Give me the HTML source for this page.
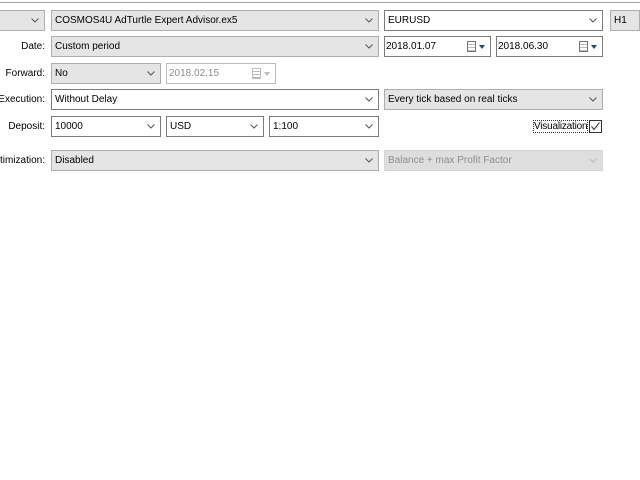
<!DOCTYPE html>
<html><head><style>
body{margin:0;width:640px;height:480px;background:#fff;position:relative;overflow:hidden;font-family:"Liberation Sans",Arial,sans-serif;font-size:10px;color:#000}
.b{position:absolute;box-sizing:border-box;border:1px solid #adadad;background:#e5e5e5;height:21px;line-height:20px;padding-left:3px;white-space:nowrap}
.w{background:#fff;border-color:#7a7a7a}
.d{color:#8d8d8d}
.dw{background:#fff;border-color:#bcbcbc;color:#8d8d8d}
.a{position:absolute;right:5px;top:7px;width:8px;height:5px}
.l{position:absolute;text-align:right;right:595px;line-height:21px;font-size:10px}
.cal{position:absolute;right:14px;top:4px;width:9px;height:11px;border:1px solid #777;background:repeating-linear-gradient(#fff 0 2px,#bbb 2px 3px);box-sizing:border-box}
.ct{position:absolute;right:5px;top:8px;border-left:3px solid transparent;border-right:3px solid transparent;border-top:4px solid #345}
</style></head><body>
<div style="position:absolute;left:0;top:2px;width:640px;height:1px;background:#a0a0a0"></div>

<div class="b" style="left:-5px;top:10px;width:50px"><svg class="a" viewBox="0 0 8 5"><polyline points="0.5,0.5 4,4 7.5,0.5" fill="none" stroke="#555" stroke-width="1"/></svg></div>
<div class="b" style="left:51px;top:10px;width:328px">COSMOS4U AdTurtle Expert Advisor.ex5<svg class="a" viewBox="0 0 8 5"><polyline points="0.5,0.5 4,4 7.5,0.5" fill="none" stroke="#555"/></svg></div>
<div class="b w" style="left:384px;top:10px;width:219px">EURUSD<svg class="a" viewBox="0 0 8 5"><polyline points="0.5,0.5 4,4 7.5,0.5" fill="none" stroke="#555"/></svg></div>
<div class="b" style="left:610px;top:10px;width:30px">H1</div>

<div class="l" style="top:36px">Date:</div>
<div class="b" style="left:51px;top:36px;width:328px">Custom period<svg class="a" viewBox="0 0 8 5"><polyline points="0.5,0.5 4,4 7.5,0.5" fill="none" stroke="#555"/></svg></div>
<div class="b w" style="left:384px;top:36px;width:107px;padding-left:1px">2018.01.07<span class="cal"></span><span class="ct"></span></div>
<div class="b w" style="left:496px;top:36px;width:107px;padding-left:1px">2018.06.30<span class="cal"></span><span class="ct"></span></div>

<div class="l" style="top:63px">Forward:</div>
<div class="b" style="left:51px;top:63px;width:110px">No<svg class="a" viewBox="0 0 8 5"><polyline points="0.5,0.5 4,4 7.5,0.5" fill="none" stroke="#555"/></svg></div>
<div class="b dw" style="left:166px;top:63px;width:110px;padding-left:2px">2018.02.15<span class="cal" style="border-color:#bbb"></span><span class="ct" style="border-top-color:#bbb"></span></div>

<div class="l" style="top:89px">Execution:</div>
<div class="b w" style="left:51px;top:89px;width:328px">Without Delay<svg class="a" viewBox="0 0 8 5"><polyline points="0.5,0.5 4,4 7.5,0.5" fill="none" stroke="#555"/></svg></div>
<div class="b" style="left:384px;top:89px;width:219px">Every tick based on real ticks<svg class="a" viewBox="0 0 8 5"><polyline points="0.5,0.5 4,4 7.5,0.5" fill="none" stroke="#555"/></svg></div>

<div class="l" style="top:116px">Deposit:</div>
<div class="b w" style="left:51px;top:116px;width:110px">10000<svg class="a" viewBox="0 0 8 5"><polyline points="0.5,0.5 4,4 7.5,0.5" fill="none" stroke="#555"/></svg></div>
<div class="b w" style="left:166px;top:116px;width:98px">USD<svg class="a" viewBox="0 0 8 5"><polyline points="0.5,0.5 4,4 7.5,0.5" fill="none" stroke="#555"/></svg></div>
<div class="b w" style="left:269px;top:116px;width:110px">1:100<svg class="a" viewBox="0 0 8 5"><polyline points="0.5,0.5 4,4 7.5,0.5" fill="none" stroke="#555"/></svg></div>
<div style="position:absolute;left:533px;top:120px;width:55px;height:13px;line-height:12px;border:1px dotted #333;box-sizing:border-box;overflow:hidden;white-space:nowrap;letter-spacing:-0.2px">Visualization</div>
<div style="position:absolute;left:589px;top:120px;width:13px;height:13px;border:1px solid #333;box-sizing:border-box;background:#fff"><svg style="position:absolute;left:1px;top:1px" width="9" height="9" viewBox="0 0 9 9"><polyline points="0.5,4.5 3,7.5 8.5,0.5" fill="none" stroke="#222"/></svg></div>

<div class="l" style="top:150px">Optimization:</div>
<div class="b" style="left:51px;top:150px;width:328px">Disabled<svg class="a" viewBox="0 0 8 5"><polyline points="0.5,0.5 4,4 7.5,0.5" fill="none" stroke="#555"/></svg></div>
<div class="b d" style="left:384px;top:150px;width:219px;background:#dedede;border-color:#d6d6d6">Balance + max Profit Factor<svg class="a" viewBox="0 0 8 5"><polyline points="0.5,0.5 4,4 7.5,0.5" fill="none" stroke="#bbb"/></svg></div>
</body></html>
